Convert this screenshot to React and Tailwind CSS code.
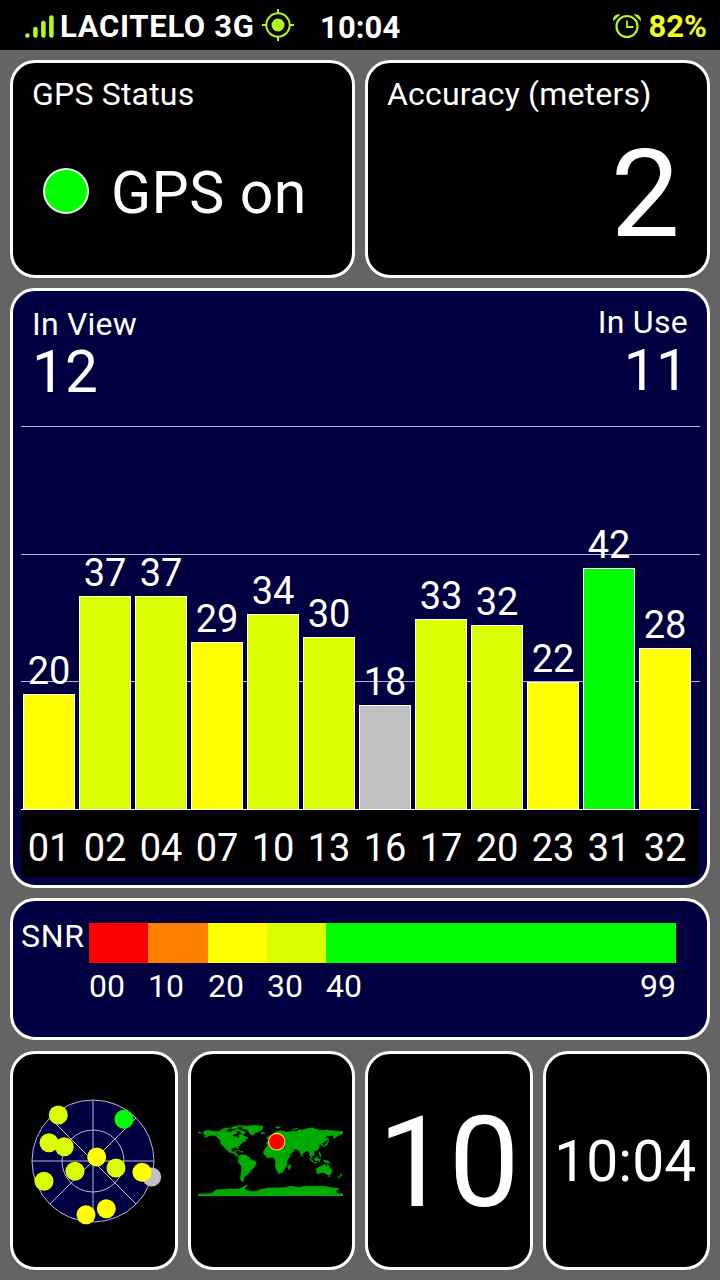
const LIME = "bg-[#dcff00]";
const YELLOW = "bg-[#ffff00]";
const GREEN = "bg-[#00ff00]";
const GRAY = "bg-[#c0c0c0]";

const satellites = [
  { id: "01", snr: 20, h: 115, color: YELLOW },
  { id: "02", snr: 37, h: 213, color: LIME },
  { id: "04", snr: 37, h: 213, color: LIME },
  { id: "07", snr: 29, h: 167, color: YELLOW },
  { id: "10", snr: 34, h: 195, color: LIME },
  { id: "13", snr: 30, h: 172, color: LIME },
  { id: "16", snr: 18, h: 104, color: GRAY },
  { id: "17", snr: 33, h: 190, color: LIME },
  { id: "20", snr: 32, h: 184, color: LIME },
  { id: "23", snr: 22, h: 127, color: YELLOW },
  { id: "31", snr: 42, h: 241, color: GREEN },
  { id: "32", snr: 28, h: 161, color: YELLOW },
];

const snrScale = [
  { label: "00", w: 59, color: "bg-[#ff0000]" },
  { label: "10", w: 60, color: "bg-[#ff8000]" },
  { label: "20", w: 59, color: YELLOW },
  { label: "30", w: 59, color: LIME },
  { label: "40", w: 350, color: GREEN },
];

const skyDots = [
  [-34.7, -46, "#dcff00"],
  [31, -41.7, "#00ff00"],
  [-44, -18.3, "#dcff00"],
  [-28.7, -14.3, "#dcff00"],
  [3.7, -4, "#ffff00"],
  [23, 7, "#dcff00"],
  [-18, 10.3, "#dcff00"],
  [58.7, 16, "#c0c0c0"],
  [49, 11.3, "#ffff00"],
  [-49, 20.3, "#dcff00"],
  [-7, 53.7, "#ffff00"],
  [13.3, 47.7, "#ffff00"],
];

// Outlines as longitude,latitude pairs.
const land = [
  "-168,66 -162,71 -150,71 -135,69 -125,70 -115,69 -108,68 -95,68 -94,72 -88,69 -82,69 -82,66 -93,61 -94,58 -83,55 -80,51 -78,55 -78,62 -70,61 -65,58 -60,55 -56,52 -65,49 -60,46 -67,44 -70,42 -76,36 -81,31 -80,26 -82,28 -85,30 -94,29 -97,26 -97,20 -92,18 -90,21 -87,21 -88,16 -83,15 -83,10 -78,9 -82,7 -88,13 -94,16 -102,18 -106,22 -112,30 -110,24 -117,33 -123,38 -124,47 -132,55 -140,60 -150,60 -156,57 -165,54 -158,59 -166,62 -161,64",
  "-180,68 -171,66 -175,65 -180,66",
  "-73,78 -60,82 -40,84 -18,82 -20,76 -25,70 -38,66 -43,60 -50,62 -54,68 -57,74 -68,76",
  "-125,72 -118,76 -105,73 -110,70 -118,71",
  "-90,73 -80,74 -68,70 -62,66 -68,62 -74,65 -72,68 -80,71 -88,71",
  "-98,76 -80,77 -85,80 -62,83 -82,83 -95,80",
  "-115,77 -100,78 -103,76",
  "-24,66 -14,66 -14,64 -22,63",
  "-78,8 -72,12 -62,11 -51,4 -50,0 -35,-6 -39,-17 -48,-26 -54,-34 -58,-38 -65,-42 -67,-50 -68,-55 -75,-50 -73,-38 -71,-18 -81,-5 -78,2",
  "-85,22 -77,21 -75,20 -80,23",
  "-74,20 -68,19 -73,18",
  "-17,15 -17,21 -9,32 -6,36 10,37 11,33 20,31 32,31 37,21 43,12 51,12 41,-3 40,-16 35,-23 31,-30 20,-35 17,-29 12,-17 13,-6 9,4 4,6 -8,4",
  "49,-12 50,-16 47,-25 44,-23 44,-17",
  "-9,37 -9,43 -1,44 -4,48 4,52 8,57 12,55 20,55 24,59 29,60 24,60 22,63 25,66 18,61 16,56 12,58 5,59 6,63 15,69 26,71 40,67 45,68 55,69 68,69 68,73 80,73 90,76 104,78 113,74 130,71 140,73 160,70 180,69 180,65 170,60 163,56 157,51 156,59 160,62 150,59 140,58 135,54 141,53 140,48 132,43 128,41 129,35 126,34 125,39 118,39 122,37 121,31 118,24 110,21 106,20 109,12 105,9 100,13 104,2 98,9 97,17 91,22 87,20 80,15 77,8 73,19 67,25 57,26 50,30 56,24 59,22 52,16 44,13 35,28 36,36 27,37 26,41 41,42 37,46 31,46 28,43 22,37 19,41 13,46 18,40 15,38 8,44 3,43 -2,37",
  "-6,50 1,51 0,54 -3,59 -6,57 -3,54",
  "-10,52 -6,53 -6,55 -10,54",
  "131,31 136,34 141,36 142,42 145,44 141,45 140,40 136,36 131,34",
  "142,54 144,50 143,46 142,49",
  "95,5 104,-2 106,-6 101,-3",
  "105,-7 115,-8 114,-9 106,-8",
  "109,1 117,7 119,1 115,-4 110,-2",
  "119,1 125,1 121,-1 123,-5 120,-5",
  "120,18 122,18 126,8 124,6 121,13",
  "131,-1 141,-3 150,-10 143,-8 138,-8 133,-4",
  "114,-22 122,-18 129,-15 136,-12 136,-16 140,-17 142,-11 146,-19 153,-27 150,-37 144,-39 138,-35 131,-32 124,-33 116,-35 115,-30",
  "145,-41 148,-41 147,-44",
  "173,-35 178,-38 175,-41",
  "172,-41 174,-42 168,-46 167,-45",
  "80,8 82,7 81,6",
  "52,71 58,75 68,77 58,74",
  "12,80 25,80 18,77",
  "-180,-90 -180,-85 -160,-85 -145,-83 -135,-75 -120,-74 -100,-73 -80,-73 -70,-69 -60,-63 -57,-64 -65,-70 -62,-75 -50,-78 -35,-78 -20,-73 -5,-70 15,-70 35,-69 50,-66 70,-69 85,-66 110,-66 130,-66 150,-69 170,-72 163,-78 165,-84 180,-85 180,-90",
];

function Card({ className = "", children }) {
  return (
    <section className={`rounded-[25px] border-[3px] border-white overflow-hidden ${className}`}>
      {children}
    </section>
  );
}

function StatusBar() {
  return (
    <header className="flex h-[50px] items-start bg-black pl-[25px] pr-[13px] text-[31px] leading-[54px] font-bold">
      <svg className="mt-[14px] h-6 w-[30px]" viewBox="0 0 30 24" fill="none" stroke="#b5f51a" strokeWidth="4.6" strokeLinecap="round">
        <path d="M2.4 21.5v.1M10.4 15v6.5M18.4 9v12.5M26.4 3.500v18" />
      </svg>
      <span className="ml-[5px] w-[194px] whitespace-nowrap tracking-[0.7px]">LACITELO 3G</span>
      <svg className="ml-[7px] mt-[8px] size-[34px]" viewBox="0 0 34 34" fill="none" stroke="#b5f51a" strokeWidth="2">
        <circle cx="17" cy="17" r="11.700" />
        <circle cx="17" cy="17" r="6.500" fill="#b5f51a" stroke="none" />
        <path d="M17 1v4.500M17 28.500V33M1 17h4.500M28.500 17H33" />
      </svg>
      <span className="ml-[25px] leading-[55px] tracking-[0.1px]">10:04</span>
      <svg className="ml-auto mt-[12px] h-[27px] w-[30px]" viewBox="0 0 30 27" fill="none" stroke="#b5f51a" strokeWidth="2.200">
        <circle cx="15" cy="14.500" r="10.500" />
        <path d="M15 8.500v6.500h6.500" strokeWidth="1.800" />
        <path d="M1.200 9.200C.2 5 4 1.200 8.300 2.500ZM28.800 9.200C29.800 5 26 1.200 21.700 2.500Z" fill="#b5f51a" stroke="none" />
      </svg>
      <span className="ml-[7px] text-[#f0ff1e]">82%</span>
    </header>
  );
}

function SignalChart() {
  return (
    <div className="relative ml-2 mr-[7px] mt-[26px]">
      <div className="absolute inset-x-0 top-0 flex flex-col gap-[126.500px]">
        <div className="h-px bg-[#b4b4d2]" />
        <div className="h-px bg-[#b4b4d2]" />
        <div className="h-px bg-[#b4b4d2]" />
      </div>
      <div className="relative flex h-[383px] items-end gap-1 pl-[2px]">
        {satellites.map((s) => (
          <div key={s.id} className="flex w-[52px] flex-col items-center">
            <span className="text-[38px] leading-[46px]">{s.snr}</span>
            <div className={`w-full border border-b-0 border-white ${s.color}`} style={{ height: s.h }} />
          </div>
        ))}
      </div>
      <div className="relative mr-px flex h-[68px] gap-1 border-t border-white bg-black pl-[2px]">
        {satellites.map((s) => (
          <span key={s.id} className="w-[52px] text-center text-[38px] leading-[76px]">{s.id}</span>
        ))}
      </div>
    </div>
  );
}

function SkyPlot() {
  return (
    <svg className="mr-px size-[144px] shrink-0" viewBox="-72 -72 144 144">
      <circle r="61" fill="#000040" />
      <g fill="none" stroke="#b8b8d4" strokeWidth="1">
        <circle r="61" />
        <circle r="31" />
        <path d="M-61 0H61M0-61V61M-43-43 43 43M-43 43 43-43" />
      </g>
      {skyDots.map(([x, y, fill]) => (
        <circle key={`${x},${y}`} cx={x} cy={y} r="9.500" fill={fill} />
      ))}
    </svg>
  );
}

function WorldMap() {
  return (
    <svg className="mb-[2px] mr-[2px] h-[73px] w-[145px] shrink-0" viewBox="-180 -90 360 180" preserveAspectRatio="none">
      <g transform="scale(1,-1)" fill="#00aa00" stroke="#00aa00" strokeWidth="1.600">
        {land.map((points) => (
          <polygon key={points} points={points} />
        ))}
      </g>
      <circle cx="15.500" cy="-44" r="20.500" fill="#ff0000" stroke="#ffe040" strokeWidth="2.800" />
    </svg>
  );
}

export default function App() {
  return (
    <main className="h-[1280px] w-[720px] overflow-hidden bg-[#646464] font-['Roboto',sans-serif] text-white">
      <StatusBar />
      <div className="flex flex-col gap-[10px] px-[10px] pt-[10px]">
        <div className="grid h-[218px] grid-cols-2 gap-[10px]">
          <Card className="bg-black pl-[19px]">
            <h2 className="mt-[11px] text-[32px] leading-[40px] tracking-[0.2px]">GPS Status</h2>
            <div className="mt-[41px] flex items-center pl-[11px]">
              <span className="size-[46px] rounded-full border-2 border-[#e8ffe8] bg-[#00ff00]" />
              <span className="ml-[22px] pt-1 text-[59px] leading-[68px] tracking-[0.4px]">GPS on</span>
            </div>
          </Card>
          <Card className="bg-black px-[19px]">
            <h2 className="mt-[11px] text-[32px] leading-[40px] tracking-[0.18px]">Accuracy (meters)</h2>
            <div className="mt-[10px] pr-[8px] text-right text-[123px] leading-[140px]">2</div>
          </Card>
        </div>

        <Card className="h-[600px] bg-[#000040]">
          <div className="flex justify-between pl-[19px] pr-[19px]">
            <div className="mt-[13px]">
              <h2 className="text-[32px] leading-[40px] tracking-[0.2px]">In View</h2>
              <div className="text-[58.500px] leading-[56px]">12</div>
            </div>
            <div className="mt-[11px] text-right">
              <h2 className="text-[32px] leading-[40px] tracking-[0.3px]">In Use</h2>
              <div className="text-[58px] leading-[57px] tracking-[-0.5px]">11</div>
            </div>
          </div>
          <SignalChart />
        </Card>

        <Card className="flex h-[142px] bg-[#000040] pl-2 pt-[22px]">
          <span className="w-[68px] text-[32px] leading-[26px] tracking-[0.7px]">SNR</span>
          <div className="w-[587px]">
            <div className="flex h-10">
              {snrScale.map((s) => (
                <div key={s.label} className={s.color} style={{ width: s.w }} />
              ))}
            </div>
            <div className="flex text-[32px] leading-[46px]">
              {snrScale.map((s) => (
                <span key={s.label} style={{ width: s.w }} className="flex justify-between">
                  {s.label}
                  {s.label === "40" && <span>99</span>}
                </span>
              ))}
            </div>
          </div>
        </Card>

        <div className="mt-px grid h-[219px] grid-cols-4 gap-[10px]">
          <Card className="flex items-center justify-center bg-black">
            <SkyPlot />
          </Card>
          <Card className="flex items-center justify-center bg-black">
            <WorldMap />
          </Card>
          <Card className="flex items-center justify-center bg-black pt-1 text-[126px] leading-[140px]">
            <span>10</span>
          </Card>
          <Card className="flex items-center justify-center bg-black pr-[2px] pt-[3px] text-[57px] leading-[64px]">
            <span>10:04</span>
          </Card>
        </div>
      </div>
    </main>
  );
}
